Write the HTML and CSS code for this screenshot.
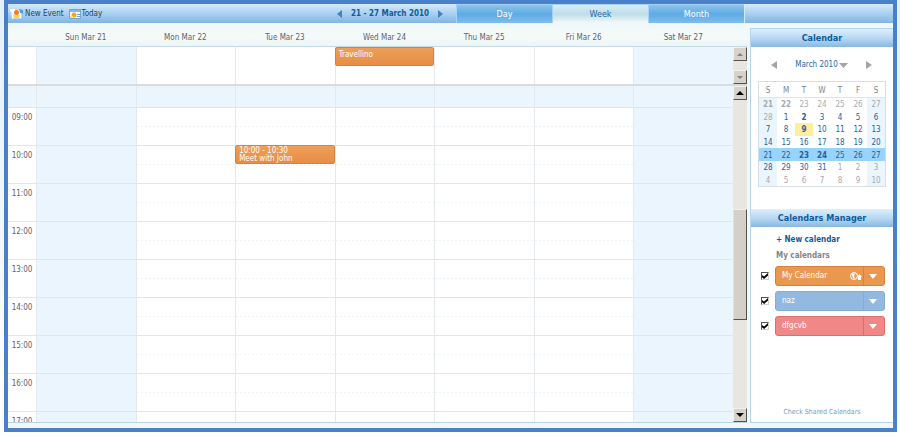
FILE: index.html
```html
<!DOCTYPE html>
<html lang="en">
<head>
<meta charset="utf-8">
<meta name="viewport" content="width=device-width, initial-scale=1">
<title>Calendar</title>
<link rel="stylesheet" href="styles.css">
</head>
<body>
<div class="frame">
  <header class="toolbar">
    <div class="actions">
      <button class="tool" type="button">
        <svg width="14" height="12" viewBox="0 0 14 12" aria-hidden="true"><path d="M1 2h11v9H2z" fill="#f4faff"/><path d="M0 1h5v3H0z" fill="#fff"/><path d="M9 1l4 1v4l-3-1z" fill="#5a9fd8"/><path d="M12 6v5H3" fill="none" stroke="#8dbbe2"/><circle cx="6.500" cy="4.500" r="2.500" fill="#f0801c"/><path d="M3 7h7l-1 3H4z" fill="#ffd23c"/></svg>
        New Event
      </button>
      <button class="tool" type="button">
        <svg width="12" height="10" viewBox="0 0 12 10" aria-hidden="true"><path d="M.5.5h11v9H.5z" fill="#f4faff" stroke="#6fa8d8"/><path d="M1 1h10v2H1z" fill="#7fb9ea"/><path d="M8 5h3v1H8zM8 7h3v1H8z" fill="#6fa8d8"/><circle cx="5" cy="6" r="2.500" fill="#f9a51c"/><path d="M1 7h3v2H1z" fill="#ffe07a"/></svg>
        Today
      </button>
    </div>
    <div class="range">
      <button class="arrow" type="button" aria-label="Previous week"><svg width="5" height="8" viewBox="0 0 5 8"><path d="M5 0v8L0 4z"/></svg></button>
      <strong>21 - 27 March 2010</strong>
      <button class="arrow" type="button" aria-label="Next week"><svg width="5" height="8" viewBox="0 0 5 8"><path d="M0 0v8l5-4z"/></svg></button>
    </div>
    <nav class="tabs">
      <button class="tab" type="button">Day</button>
      <button class="tab active" type="button">Week</button>
      <button class="tab" type="button">Month</button>
    </nav>
    <div class="toolbar-end"></div>
  </header>

  <div class="body">
    <main class="week">
      <div class="row heads">
        <span></span><span>Sun Mar 21</span><span>Mon Mar 22</span><span>Tue Mar 23</span><span>Wed Mar 24</span><span>Thu Mar 25</span><span>Fri Mar 26</span><span>Sat Mar 27</span>
      </div>
      <div class="pane allday">
        <div class="row">
          <div class="time"></div><div class="cell off"></div><div class="cell"></div><div class="cell"></div>
          <div class="cell"><div class="event">Travellino</div></div>
          <div class="cell"></div><div class="cell"></div><div class="cell off"></div>
        </div>
        <div class="scrollbar idle">
          <button type="button" aria-label="Scroll all-day events up"><svg width="6" height="3" viewBox="0 0 6 3"><path d="M3 0l3 3H0z"/></svg></button>
          <button type="button" aria-label="Scroll all-day events down"><svg width="6" height="3" viewBox="0 0 6 3"><path d="M0 0h6L3 3z"/></svg></button>
        </div>
      </div>
      <div class="pane hours">
        <div class="grid">
          <div class="row early"><div class="time"></div><div class="cell"></div><div class="cell"></div><div class="cell"></div><div class="cell"></div><div class="cell"></div><div class="cell"></div><div class="cell"></div></div>
          <div class="row hour"><div class="time">09:00</div><div class="cell off"></div><div class="cell"></div><div class="cell"></div><div class="cell"></div><div class="cell"></div><div class="cell"></div><div class="cell off"></div></div>
          <div class="row hour"><div class="time">10:00</div><div class="cell off"></div><div class="cell"></div><div class="cell"><div class="event">10:00 - 10:30<br>Meet with John</div></div><div class="cell"></div><div class="cell"></div><div class="cell"></div><div class="cell off"></div></div>
          <div class="row hour"><div class="time">11:00</div><div class="cell off"></div><div class="cell"></div><div class="cell"></div><div class="cell"></div><div class="cell"></div><div class="cell"></div><div class="cell off"></div></div>
          <div class="row hour"><div class="time">12:00</div><div class="cell off"></div><div class="cell"></div><div class="cell"></div><div class="cell"></div><div class="cell"></div><div class="cell"></div><div class="cell off"></div></div>
          <div class="row hour"><div class="time">13:00</div><div class="cell off"></div><div class="cell"></div><div class="cell"></div><div class="cell"></div><div class="cell"></div><div class="cell"></div><div class="cell off"></div></div>
          <div class="row hour"><div class="time">14:00</div><div class="cell off"></div><div class="cell"></div><div class="cell"></div><div class="cell"></div><div class="cell"></div><div class="cell"></div><div class="cell off"></div></div>
          <div class="row hour"><div class="time">15:00</div><div class="cell off"></div><div class="cell"></div><div class="cell"></div><div class="cell"></div><div class="cell"></div><div class="cell"></div><div class="cell off"></div></div>
          <div class="row hour"><div class="time">16:00</div><div class="cell off"></div><div class="cell"></div><div class="cell"></div><div class="cell"></div><div class="cell"></div><div class="cell"></div><div class="cell off"></div></div>
          <div class="row hour"><div class="time">17:00</div><div class="cell off"></div><div class="cell"></div><div class="cell"></div><div class="cell"></div><div class="cell"></div><div class="cell"></div><div class="cell off"></div></div>
        </div>
        <div class="scrollbar">
          <button type="button" aria-label="Scroll hours up"><svg width="8" height="4" viewBox="0 0 8 4"><path d="M4 0l4 4H0z"/></svg></button>
          <div class="track"><div class="thumb"></div></div>
          <button type="button" aria-label="Scroll hours down"><svg width="8" height="4" viewBox="0 0 8 4"><path d="M0 0h8L4 4z"/></svg></button>
        </div>
      </div>
    </main>

    <aside class="side">
      <section class="picker">
        <h2>Calendar</h2>
        <div class="month">
          <button class="arrow" type="button" aria-label="Previous month"><svg width="6" height="8" viewBox="0 0 6 8"><path d="M6 0v8L0 4z"/></svg></button>
          <button class="month-name" type="button">March 2010 <svg width="9" height="5" viewBox="0 0 9 5"><path d="M0 0h9L4.500 5z"/></svg></button>
          <button class="arrow" type="button" aria-label="Next month"><svg width="6" height="8" viewBox="0 0 6 8"><path d="M0 0v8l6-4z"/></svg></button>
        </div>
        <table class="mini">
          <thead><tr><th>S</th><th>M</th><th>T</th><th>W</th><th>T</th><th>F</th><th>S</th></tr></thead>
          <tbody>
            <tr><td class="out"><b>21</b></td><td class="out"><b>22</b></td><td class="out">23</td><td class="out">24</td><td class="out">25</td><td class="out">26</td><td class="out">27</td></tr>
            <tr><td class="out">28</td><td>1</td><td><b>2</b></td><td>3</td><td>4</td><td>5</td><td>6</td></tr>
            <tr><td>7</td><td>8</td><td class="today"><b>9</b></td><td>10</td><td>11</td><td>12</td><td>13</td></tr>
            <tr><td>14</td><td>15</td><td>16</td><td>17</td><td>18</td><td>19</td><td>20</td></tr>
            <tr class="current"><td>21</td><td>22</td><td><b>23</b></td><td><b>24</b></td><td>25</td><td>26</td><td>27</td></tr>
            <tr><td>28</td><td>29</td><td>30</td><td>31</td><td class="out">1</td><td class="out">2</td><td class="out">3</td></tr>
            <tr><td class="out">4</td><td class="out">5</td><td class="out">6</td><td class="out">7</td><td class="out">8</td><td class="out">9</td><td class="out">10</td></tr>
          </tbody>
        </table>
      </section>
      <section class="manager">
        <h2>Calendars Manager</h2>
        <a class="new" href="#new">+ New calendar</a>
        <h3>My calendars</h3>
        <ul class="calendars">
          <li>
            <input type="checkbox" id="cal-my" checked>
            <div class="chip orange"><label for="cal-my">My Calendar</label>
              <svg width="12" height="8" viewBox="0 0 12 8" aria-hidden="true"><circle cx="4" cy="4" r="3.500" fill="none" stroke="#fff"/><path d="M2 1l3 1-1 2 1 3-2-1-1-3zM9.500 2L12 5h-1v3H8V5H7z" fill="#fff"/></svg>
              <button type="button" aria-label="My Calendar options"><svg width="8" height="5" viewBox="0 0 8 5"><path d="M0 0h8L4 5z"/></svg></button></div>
          </li>
          <li>
            <input type="checkbox" id="cal-naz" checked>
            <div class="chip blue"><label for="cal-naz">naz</label>
              <button type="button" aria-label="naz options"><svg width="8" height="5" viewBox="0 0 8 5"><path d="M0 0h8L4 5z"/></svg></button></div>
          </li>
          <li>
            <input type="checkbox" id="cal-df" checked>
            <div class="chip red"><label for="cal-df">dfgcvb</label>
              <button type="button" aria-label="dfgcvb options"><svg width="8" height="5" viewBox="0 0 8 5"><path d="M0 0h8L4 5z"/></svg></button></div>
          </li>
        </ul>
        <a class="shared" href="#shared">Check Shared Calendars</a>
      </section>
    </aside>
  </div>
</div>
</body>
</html>
```
FILE: styles.css
```css
* { box-sizing: border-box; }

body {
  margin: 0;
  height: 100vh;
  padding: 0 3px 5px 4px;
  background: linear-gradient(to bottom, #e3f0fd 0, #ffffff 100%);
  color: #5c646c;
  font: 8px/10px "DejaVu Sans Condensed", "DejaVu Sans", sans-serif;
}

button {
  margin: 0;
  padding: 0;
  border: 0;
  background: none;
  color: inherit;
  font: inherit;
}

svg { display: block; flex: none; }
a { text-decoration: none; }

.frame {
  display: flex;
  flex-direction: column;
  height: 100%;
  border: 4px solid #4a7fc9;
  background: #f0f8fc;
}

/* Toolbar */
.toolbar {
  display: flex;
  flex: none;
  height: 19px;
  background: linear-gradient(#d3ebfc, #a9d0f0 50%, #82b5e3);
}

.actions { display: flex; flex: 1; gap: 5px; padding-left: 2px; }
.tool { display: flex; align-items: center; gap: 1px; color: #28445e; }

.range { display: flex; align-items: center; gap: 9px; padding-right: 13px; color: #0f5b9c; }
.range .arrow { fill: #4584ba; }

.tabs { display: flex; }
.tab {
  width: 96px;
  border-left: 1px solid #a6d3f5;
  border-top: 1px solid #a6d3f5;
  background: linear-gradient(#8cc3ef, #5eabe4 50%, #7cbdee);
  color: #fff;
  font-size: 9px;
}
.tab.active { background: linear-gradient(#d9eef6, #bedde8 50%, #f1f9fa); color: #2369a8; }
.toolbar-end { width: 149px; border-left: 1px solid #d3ebfc; }

/* Week view */
.body { display: flex; flex: 1; gap: 3px; min-height: 0; padding-bottom: 5px; }
.week { display: flex; flex: 1; flex-direction: column; min-width: 0; border-bottom: 1px solid #b9d3e4; }

.row { display: grid; flex: 1; grid-template-columns: 28px repeat(7, 1fr); }

.heads {
  flex: none;
  height: 24px;
  padding-right: 14px;
  align-items: center;
  border-bottom: 1px solid #c4dbe5;
  background: linear-gradient(#eef8f8, #f5faf9 60%, #ecf5f7);
  text-align: center;
}
.heads span { padding-top: 6px; }

.pane { display: flex; background: #fff; }
.allday { flex: none; height: 39px; border-bottom: 2px solid #d9dbdc; }
.hours { flex: 1; min-height: 0; }
.grid { flex: 1; height: 100%; overflow: hidden; }

.cell { min-width: 0; border-left: 1px solid #e3e9ec; }
.off, .early > div { background: #eaf5fd; }
.early { height: 21px; }
.hour { height: 38px; }
.hour > div { border-top: 1px solid #e2e6e8; }
.hour .cell:not(.off) {
  background: repeating-linear-gradient(to right, #f1f3f4 0 2px, #fff 2px 4px) 0 18px / 100% 1px no-repeat;
}
.time { padding-top: 5px; text-align: center; }

.event {
  height: 19px;
  margin-left: -1px;
  padding: 3px 3px;
  border: 1px solid #d5843f;
  border-radius: 2px;
  background: linear-gradient(#ee9f5a, #e78d45);
  color: #fff;
  line-height: 8px;
}
.hour .event { padding-top: 1px; margin-top: -1px; }

.scrollbar { display: flex; flex: none; flex-direction: column; width: 14px; background: #e8e6e1; }
.idle { justify-content: space-between; }
.scrollbar button {
  display: flex;
  align-items: center;
  justify-content: center;
  height: 14px;
  border: 1px solid;
  border-color: #f2f0ec #55524d #55524d #f2f0ec;
  background: #d6d2ca;
  fill: #000;
}
.idle button { fill: #85827c; }
.track { display: grid; flex: 1; grid-template-rows: 109fr 111fr 88fr; }
.thumb { grid-row: 2; border: 1px solid; border-color: #f2f0ec #55524d #55524d #e5e2dc; background: #d4d0c8; }

/* Side panel */
.side {
  display: flex;
  flex: none;
  flex-direction: column;
  width: 143px;
  margin-top: 5px;
  border: 1px solid #b5d7ee;
  border-right: 0;
  background: #fff;
}
.side h2 {
  margin: 0;
  background: linear-gradient(#dceffc, #b4d6f1 55%, #86b7e2);
  color: #0f5b9c;
  font-size: 9px;
  line-height: 18px;
  text-align: center;
}
.picker { height: 180px; flex: none; }
.month { display: flex; align-items: center; justify-content: space-between; padding: 12px 21px 0 20px; }
.month .arrow, .month-name { fill: #a5a5a5; }
.month-name { display: flex; align-items: center; gap: 1px; padding-top: 1px; color: #2369a8; }

.mini {
  width: 128px;
  height: 106px;
  margin: 11px auto 0 7px;
  border: 1px solid #d7dfe4;
  border-collapse: separate;
  border-spacing: 0;
  table-layout: fixed;
  text-align: center;
}
.mini th { padding: 2px 0 0; height: 16px; border-bottom: 1px solid #dfe4e7; color: #7d8489; font-weight: normal; }
.mini td { padding: 2px 0 0; color: #1f639f; }
.mini td:first-child, .mini td:last-child { background: #eaf5fd; }
.mini .out { color: #a4abb0; }
.mini .today { background: #fdeea0; }
.mini .current td { background: #98d3fb; }

.manager { display: flex; flex: 1; flex-direction: column; }
.new { margin: 8px 0 6px 25px; color: #0f5b9c; font-weight: bold; }
.manager h3 { margin: 0 0 5px 25px; color: #858585; font-size: 8px; line-height: 10px; }
.calendars { display: grid; gap: 5px; margin: 0 8px 0 10px; padding: 0; list-style: none; }
.calendars li { display: flex; align-items: center; gap: 6px; }
.calendars input {
  display: grid;
  place-items: start center;
  width: 8px;
  height: 8px;
  margin: 0;
  border: 1px solid;
  border-color: #55524d #d6d2ca #d6d2ca #55524d;
  appearance: none;
  background: #fff;
}
.calendars input:checked::before {
  content: "";
  width: 6px;
  height: 6px;
  background: #000;
  clip-path: polygon(0 35%, 35% 60%, 100% 0, 100% 40%, 35% 100%, 0 70%);
}
.chip { display: flex; flex: 1; align-items: center; height: 20px; border: 1px solid; border-radius: 3px; color: #fff; }
.chip label { flex: 1; padding-left: 6px; }
.chip > svg { margin-right: 1px; }
.chip button { display: flex; align-items: center; justify-content: center; width: 21px; height: 100%; padding-right: 2px; border-left: 1px solid; border-color: inherit; fill: #fff; }
.orange { border-color: #d98237; background: #ea984f; }
.blue { border-color: #82aeda; background: #93b9e1; }
.red { border-color: #e56a6a; background: #f08888; }
.shared { margin: auto 0 5px; color: #7d9cb2; font-size: 7px; text-align: center; }
```
